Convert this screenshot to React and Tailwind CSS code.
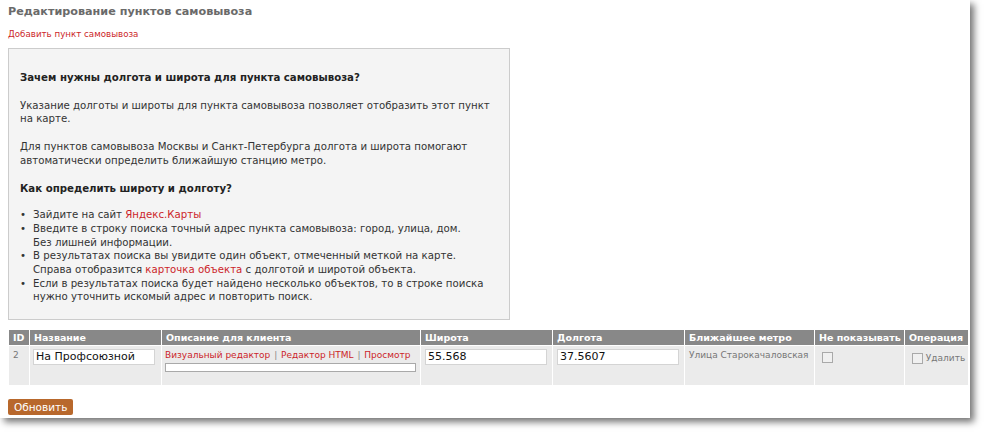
import React from "react";

const FONT = { fontFamily: '"DejaVu Sans", Verdana, sans-serif' };

const COLS = [
  { title: "ID", w: "w-[21px]" },
  { title: "Название", w: "w-[132px]" },
  { title: "Описание для клиента", w: "w-[259px]" },
  { title: "Широта", w: "w-[132px]" },
  { title: "Долгота", w: "w-[132px]" },
  { title: "Ближайшее метро", w: "w-[130px]" },
  { title: "Не показывать", w: "w-[90px]" },
  { title: "Операция", w: "w-[64px]" },
];

function Checkbox() {
  return <span className="inline-block w-[11px] h-[11px] border border-[#a9a9a9] bg-[#f0f0f0] align-middle" />;
}

export default function App() {
  return (
    <div className="w-[987px] h-[435px] bg-white" style={FONT}>
      <div className="w-[970px] h-[418px] bg-white shadow-[4px_4px_7px_rgba(0,0,0,0.55)] pt-[4px] px-[8px]">
        <h1 className="text-[11.2px] font-bold text-[#6a6a6a] leading-[16px]">Редактирование пунктов самовывоза</h1>
        <a className="block mt-[8px] text-[8.7px] text-[#cc1f2a] leading-[12px]">Добавить пункт самовывоза</a>

        <div className="mt-[8px] w-[502px] h-[272px] bg-[#f4f4f4] border border-[#cccccc] pl-[11px] pr-[10px] pt-[22px] text-[10.2px] leading-[13.7px] text-[#222]">
          <p className="font-bold">Зачем нужны долгота и широта для пункта самовывоза?</p>
          <p className="mt-[14px] text-[#333]">
            Указание долготы и широты для пункта самовывоза позволяет отобразить этот пункт на карте.
          </p>
          <p className="mt-[14px] text-[#333]">
            Для пунктов самовывоза Москвы и Санкт-Петербурга долгота и широта помогают автоматически определить ближайшую станцию метро.
          </p>
          <p className="mt-[14px] font-bold">Как определить широту и долготу?</p>
          <ul className="mt-[13px] text-[#333]">
            <li className="flex"><span className="w-[13px] shrink-0">•</span><span>Зайдите на сайт <a className="text-[#cc1f2a]">Яндекс.Карты</a></span></li>
            <li className="flex"><span className="w-[13px] shrink-0">•</span><span>Введите в строку поиска точный адрес пункта самовывоза: город, улица, дом.<br />Без лишней информации.</span></li>
            <li className="flex"><span className="w-[13px] shrink-0">•</span><span>В результатах поиска вы увидите один объект, отмеченный меткой на карте.<br />Справа отобразится <a className="text-[#cc1f2a]">карточка объекта</a> с долготой и широтой объекта.</span></li>
            <li className="flex"><span className="w-[13px] shrink-0">•</span><span>Если в результатах поиска будет найдено несколько объектов, то в строке поиска нужно уточнить искомый адрес и повторить поиск.</span></li>
          </ul>
        </div>

        <table className="mt-[9px] table-fixed border-collapse w-[960px] text-[9.5px]">
          <thead>
            <tr className="bg-[#888888] h-[16px]">
              {COLS.map((c) => (
                <th key={c.title} className={`${c.w} border border-white px-[4px] text-left font-bold text-white leading-[14px] whitespace-nowrap`}>
                  {c.title}
                </th>
              ))}
            </tr>
          </thead>
          <tbody>
            <tr className="bg-[#ebebeb] h-[40px] align-top text-[#777]">
              <td className="border border-white px-[4px] pt-[3px] text-[9px]">2</td>
              <td className="border border-white px-[3px] pt-[3px]">
                <input readOnly value="На Профсоюзной" className="w-[122px] h-[16px] bg-white border border-[#d4d4d4] px-[2px] text-[11px] text-[#111] outline-none" />
              </td>
              <td className="border border-white px-[3px] pt-[3px] overflow-hidden">
                <div className="text-[#cc1f2a] text-[9px] leading-[12px] whitespace-nowrap">
                  Визуальный редактор <span className="text-[#888] mx-[1px]">|</span> Редактор HTML <span className="text-[#888] mx-[1px]">|</span> Просмотр
                </div>
                <div className="mt-[2px] w-[251px] h-[9px] bg-white border border-[#a9a9a9]" />
              </td>
              <td className="border border-white px-[4px] pt-[3px]">
                <input readOnly value="55.568" className="w-[122px] h-[16px] bg-white border border-[#d4d4d4] px-[2px] text-[11px] text-[#111] outline-none" />
              </td>
              <td className="border border-white px-[4px] pt-[3px]">
                <input readOnly value="37.5607" className="w-[122px] h-[16px] bg-white border border-[#d4d4d4] px-[2px] text-[11px] text-[#111] outline-none" />
              </td>
              <td className="border border-white px-[4px] pt-[3px] text-[9px] leading-[12px] whitespace-nowrap overflow-hidden">Улица Старокачаловская</td>
              <td className="border border-white px-[7px] pt-[4px]"><Checkbox /></td>
              <td className="border border-white pl-[7px] pt-[6px] whitespace-nowrap text-[9px]"><Checkbox /> Удалить</td>
            </tr>
          </tbody>
        </table>

        <button className="mt-[13px] h-[16px] px-[6px] bg-[#b8682c] text-white text-[10.5px] leading-[16px] rounded-[2px]">Обновить</button>
      </div>
    </div>
  );
}
